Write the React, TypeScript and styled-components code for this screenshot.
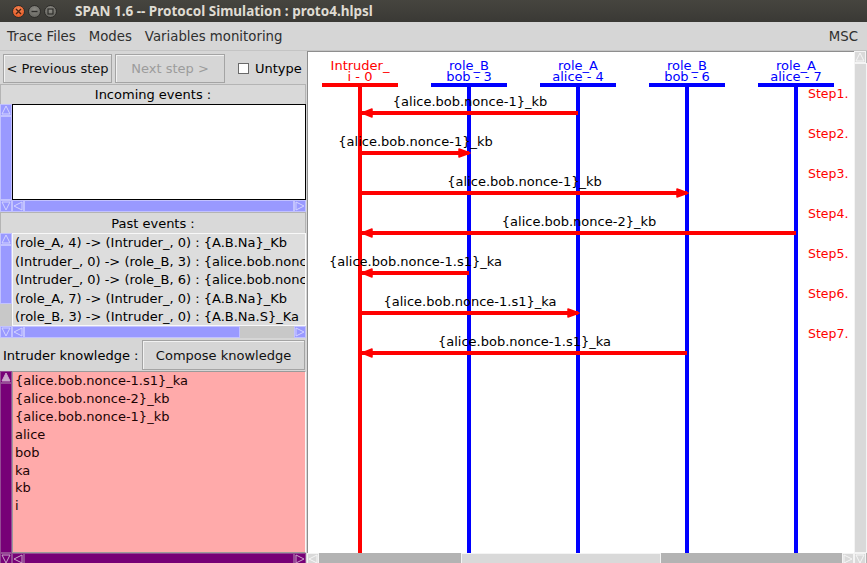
import React from 'react';
import styled, { createGlobalStyle } from 'styled-components';

type Tone = 'blue' | 'purple' | 'grey';
type Dir = 'up' | 'down' | 'left' | 'right';

const tones: Record<Tone, { thumb: string; edge: string; track: string; arrow: string; fill: boolean }> = {
	blue: { thumb: '#9999ff', edge: '#c2c2ff', track: '#c8c8c8', arrow: '#d4d4ff', fill: false },
	purple: { thumb: '#770077', edge: '#944a94', track: '#770077', arrow: '#caa6ca', fill: true },
	grey: { thumb: '#d9d9d9', edge: '#f4f4f4', track: '#b3b3b3', arrow: '#f6f6f6', fill: false },
};

const GlobalStyle = createGlobalStyle`
	html, body {
		margin: 0;
		padding: 0;
		background: #d6d6d6;
		overflow: hidden;
	}
	* {
		box-sizing: border-box;
	}
`;

const Window = styled.div`
	width: 867px;
	height: 563px;
	display: flex;
	flex-direction: column;
	overflow: hidden;
	background: #d6d6d6;
	font-family: 'DejaVu Sans', sans-serif;
	font-size: 13px;
	color: #000;
`;

const TitleBar = styled.div`
	flex: none;
	height: 22px;
	display: flex;
	align-items: center;
	padding-left: 12px;
	background: linear-gradient(#46453f, #3a3935);
`;

const WinButtons = styled.div`
	display: flex;
	gap: 3px;
`;

const WinButton = styled.div<{ $close?: boolean }>`
	width: 13px;
	height: 13px;
	border-radius: 50%;
	display: flex;
	align-items: center;
	justify-content: center;
	background: ${(p) =>
		p.$close ? 'radial-gradient(circle at 50% 35%, #f58a5a, #df4c16)' : 'radial-gradient(circle at 50% 35%, #8d8c86, #5d5c57)'};
	border: 1px solid #2e2d2a;
`;

const Title = styled.span`
	margin-left: 18px;
	font-family: 'Noto Sans', sans-serif;
	font-weight: 700;
	font-size: 13.5px;
	color: #dfdbd2;
`;

const MenuBar = styled.div`
	flex: none;
	height: 29px;
	display: flex;
	align-items: center;
	gap: 13px;
	padding: 0 9px 0 7px;
	font-size: 13.3px;
	color: #2f2f2f;
	border-bottom: 1px solid #c4c4c4;

	> span:last-child {
		margin-left: auto;
	}
`;

const Body = styled.div`
	flex: 1;
	display: flex;
	min-height: 0;
`;

const LeftPanel = styled.div`
	width: 306px;
	flex: none;
	display: flex;
	flex-direction: column;
`;

const Toolbar = styled.div`
	height: 33px;
	flex: none;
	display: flex;
	align-items: center;
	gap: 3px;
	padding: 1px 0 0 3px;
`;

const Button = styled.button<{ $width: number; $disabled?: boolean }>`
	width: ${(p) => p.$width}px;
	height: 29px;
	padding: 0;
	font-family: 'DejaVu Sans', sans-serif;
	font-size: 13px;
	color: ${(p) => (p.$disabled ? '#9c9c9c' : '#111')};
	background: #d6d6d6;
	border: 1px solid #a4a4a4;
	box-shadow: inset 1px 1px 0 #f2f2f2;
	border-radius: 0;
`;

const Check = styled.span`
	width: 11px;
	height: 11px;
	margin-left: 10px;
	background: #fff;
	border: 1px solid #6a6a6a;
`;

const CheckLabel = styled.span`
	margin-left: 3px;
`;

const SectionLabel = styled.div<{ $height: number }>`
	height: ${(p) => p.$height}px;
	flex: none;
	display: flex;
	align-items: center;
	justify-content: center;
	border: 1px solid #b4b4b4;
	border-bottom: none;
	background: #d9d9d9;
`;

const ListBox = styled.div<{ $height: number }>`
	height: ${(p) => p.$height}px;
	flex: none;
	display: grid;
	grid-template-columns: 12px 1fr;
	grid-template-rows: 1fr 12px;
	grid-template-areas: 'v c' 'v h';
`;

const ListContent = styled.div<{ $variant: 'white' | 'grey' | 'pink' }>`
	grid-area: c;
	overflow: hidden;
	white-space: nowrap;
	padding-left: ${(p) => (p.$variant === 'white' ? 1 : 2)}px;
	line-height: ${(p) => (p.$variant === 'grey' ? 18.5 : 17.9)}px;
	color: ${(p) => (p.$variant === 'pink' ? '#1c0404' : '#000')};
	background: ${(p) => (p.$variant === 'white' ? '#fff' : p.$variant === 'grey' ? '#dddddd' : '#ffaaaa')};
	border: ${(p) =>
		p.$variant === 'white' ? '1px solid #000' : p.$variant === 'grey' ? '1px solid #f8f8f8' : '1px solid #9a9a9a'};
	border-right-color: ${(p) => (p.$variant === 'white' ? '#000' : '#fafafa')};
`;

const KnowledgeRow = styled.div`
	height: 33px;
	flex: none;
	display: flex;
	align-items: center;
	padding: 1px 1px 0 3px;

	> button {
		margin-left: auto;
		height: 30px;
	}
`;

const RightPanel = styled.div`
	flex: 1;
	display: grid;
	grid-template-columns: 1fr 13px;
	grid-template-rows: 502px 12px;
	grid-template-areas: 'c v' 'h v';
	padding-left: 1px;
	min-width: 0;
`;

const Canvas = styled.div`
	grid-area: c;
	background: #fff;
	border-left: 1px solid #8e8e8e;
	border-top: 1px solid #8e8e8e;
	overflow: hidden;

	svg {
		display: block;
	}
`;

const Bar = styled.div<{ $vertical?: boolean; $tone: Tone; $area: string }>`
	grid-area: ${(p) => p.$area};
	display: flex;
	flex-direction: ${(p) => (p.$vertical ? 'column' : 'row')};
	background: ${(p) => tones[p.$tone].track};
	min-width: 0;
	min-height: 0;
`;

const ArrowBox = styled.div<{ $tone: Tone }>`
	flex: none;
	width: 12px;
	height: 12px;
	display: flex;
	align-items: center;
	justify-content: center;
	background: ${(p) => tones[p.$tone].thumb};
	border: 1px solid ${(p) => tones[p.$tone].edge};
`;

const Gap = styled.div<{ $grow: number }>`
	flex: ${(p) => p.$grow} 1 0;
`;

const Thumb = styled.div<{ $grow: number; $tone: Tone }>`
	flex: ${(p) => p.$grow} 1 0;
	background: ${(p) => tones[p.$tone].thumb};
	border: 1px solid ${(p) => tones[p.$tone].edge};
`;

const arrowPoints: Record<Dir, string> = {
	up: '5,1 9,9 1,9',
	down: '1,1 9,1 5,9',
	left: '1,5 9,1 9,9',
	right: '1,1 9,5 1,9',
};

const Arrow = ({ dir, tone }: { dir: Dir; tone: Tone }) => (
	<ArrowBox $tone={tone}>
		<svg width='10' height='10' viewBox='0 0 10 10'>
			<polygon
				points={arrowPoints[dir]}
				fill={tones[tone].fill && dir === 'up' ? tones[tone].arrow : 'none'}
				stroke={tones[tone].arrow}
				strokeWidth='1'
			/>
		</svg>
	</ArrowBox>
);

interface IScrollProps {
	vertical?: boolean;
	tone: Tone;
	area: string;
	before: number;
	size: number;
	after: number;
}

const Scrollbar = ({ vertical, tone, area, before, size, after }: IScrollProps) => (
	<Bar $vertical={vertical} $tone={tone} $area={area}>
		<Arrow dir={vertical ? 'up' : 'left'} tone={tone} />
		<Gap $grow={before} />
		<Thumb $grow={size} $tone={tone} />
		<Gap $grow={after} />
		<Arrow dir={vertical ? 'down' : 'right'} tone={tone} />
	</Bar>
);

const pastEvents = [
	'(role_A, 4) -> (Intruder_, 0) : {A.B.Na}_Kb',
	'(Intruder_, 0) -> (role_B, 3) : {alice.bob.nonce-1}_kb',
	'(Intruder_, 0) -> (role_B, 6) : {alice.bob.nonce-1}_kb',
	'(role_A, 7) -> (Intruder_, 0) : {A.B.Na}_Kb',
	'(role_B, 3) -> (Intruder_, 0) : {A.B.Na.S}_Ka',
];

const knowledge = [
	'{alice.bob.nonce-1.s1}_ka',
	'{alice.bob.nonce-2}_kb',
	'{alice.bob.nonce-1}_kb',
	'alice',
	'bob',
	'ka',
	'kb',
	'i',
];

const RED = '#ff0000';
const BLUE = '#0000ff';

const agents = [
	{ x: 360, name: 'Intruder_', inst: 'i - 0', color: RED },
	{ x: 469, name: 'role_B', inst: 'bob - 3', color: BLUE },
	{ x: 578, name: 'role_A', inst: 'alice - 4', color: BLUE },
	{ x: 687, name: 'role_B', inst: 'bob - 6', color: BLUE },
	{ x: 796, name: 'role_A', inst: 'alice - 7', color: BLUE },
];

const messages = [
	{ from: 578, to: 360, text: '{alice.bob.nonce-1}_kb' },
	{ from: 360, to: 469, text: '{alice.bob.nonce-1}_kb' },
	{ from: 360, to: 687, text: '{alice.bob.nonce-1}_kb' },
	{ from: 796, to: 360, text: '{alice.bob.nonce-2}_kb' },
	{ from: 469, to: 360, text: '{alice.bob.nonce-1.s1}_ka' },
	{ from: 360, to: 578, text: '{alice.bob.nonce-1.s1}_ka' },
	{ from: 687, to: 360, text: '{alice.bob.nonce-1.s1}_ka' },
];

const Msc = () => (
	<svg width='546' height='501' viewBox='308 52 546 501' fontFamily="'DejaVu Sans', sans-serif" fontSize='13'>
		{agents.map((a) => (
			<g key={a.inst} fill={a.color}>
				<text x={a.x} y={70} textAnchor='middle'>
					{a.name}
				</text>
				<text x={a.x} y={81} textAnchor='middle'>
					{a.inst}
				</text>
				<rect x={a.x - 38} y={83} width={76} height={4} />
				<rect x={a.x - 2} y={87} width={4} height={470} />
			</g>
		))}
		{messages.map((m, i) => {
			const y = 113 + i * 40;
			const left = m.to < m.from;
			const tip = left ? m.to + 2 : m.to + 1;
			const base = left ? tip + 10 : tip - 11;
			return (
				<g key={i}>
					<rect x={Math.min(m.from, m.to)} y={y - 2} width={Math.abs(m.from - m.to)} height={4} fill={RED} />
					<polygon
						points={`${tip},${y} ${base},${y - 4} ${base},${y + 4}`}
						fill={RED}
						stroke={RED}
						strokeWidth='1.5'
						strokeLinejoin='round'
					/>
					<text x={(m.from + m.to) / 2 + 1} y={y - 7} textAnchor='middle' fill='#000'>
						{m.text}
					</text>
					<text x={808} y={98 + i * 40} fill={RED} fontSize='12.5'>
						Step{i + 1}.
					</text>
				</g>
			);
		})}
	</svg>
);

const App = () => {
	return (
		<Window>
			<GlobalStyle />
			<TitleBar>
				<WinButtons>
					<WinButton $close>
						<svg width='7' height='7' viewBox='0 0 7 7'>
							<path d='M1 1 L6 6 M6 1 L1 6' stroke='#4a2414' strokeWidth='1.4' />
						</svg>
					</WinButton>
					<WinButton>
						<svg width='7' height='7' viewBox='0 0 7 7'>
							<path d='M0.5 3.5 H6.5' stroke='#2e2d2a' strokeWidth='1.4' />
						</svg>
					</WinButton>
					<WinButton>
						<svg width='7' height='7' viewBox='0 0 7 7'>
							<rect x='1' y='1' width='5' height='5' fill='none' stroke='#2e2d2a' strokeWidth='1.2' />
						</svg>
					</WinButton>
				</WinButtons>
				<Title>SPAN 1.6 -- Protocol Simulation : proto4.hlpsl</Title>
			</TitleBar>

			<MenuBar>
				<span>Trace Files</span>
				<span>Modes</span>
				<span>Variables monitoring</span>
				<span>MSC</span>
			</MenuBar>

			<Body>
				<LeftPanel>
					<Toolbar>
						<Button $width={109}>&lt; Previous step</Button>
						<Button $width={110} $disabled>
							Next step &gt;
						</Button>
						<Check />
						<CheckLabel>Untype</CheckLabel>
					</Toolbar>

					<SectionLabel $height={20}>Incoming events :</SectionLabel>
					<ListBox $height={108}>
						<Scrollbar vertical tone='blue' area='v' before={0} size={1} after={0} />
						<ListContent $variant='white' />
						<Scrollbar tone='blue' area='h' before={0} size={1} after={0} />
					</ListBox>

					<SectionLabel $height={21}>Past events :</SectionLabel>
					<ListBox $height={105}>
						<Scrollbar vertical tone='blue' area='v' before={0} size={58} after={22} />
						<ListContent $variant='grey'>
							{pastEvents.map((e) => (
								<div key={e}>{e}</div>
							))}
						</ListContent>
						<Scrollbar tone='blue' area='h' before={0} size={213} after={54} />
					</ListBox>

					<KnowledgeRow>
						Intruder knowledge :<Button $width={163}>Compose knowledge</Button>
					</KnowledgeRow>
					<ListBox $height={194}>
						<Scrollbar vertical tone='purple' area='v' before={0} size={1} after={0} />
						<ListContent $variant='pink'>
							{knowledge.map((k) => (
								<div key={k}>{k}</div>
							))}
						</ListContent>
						<Scrollbar tone='purple' area='h' before={0} size={1} after={0} />
					</ListBox>
				</LeftPanel>

				<RightPanel>
					<Canvas>
						<Msc />
					</Canvas>
					<Scrollbar vertical tone='grey' area='v' before={0} size={1} after={0} />
					<Scrollbar tone='grey' area='h' before={143} size={199} after={182} />
				</RightPanel>
			</Body>
		</Window>
	);
};

export default App;
